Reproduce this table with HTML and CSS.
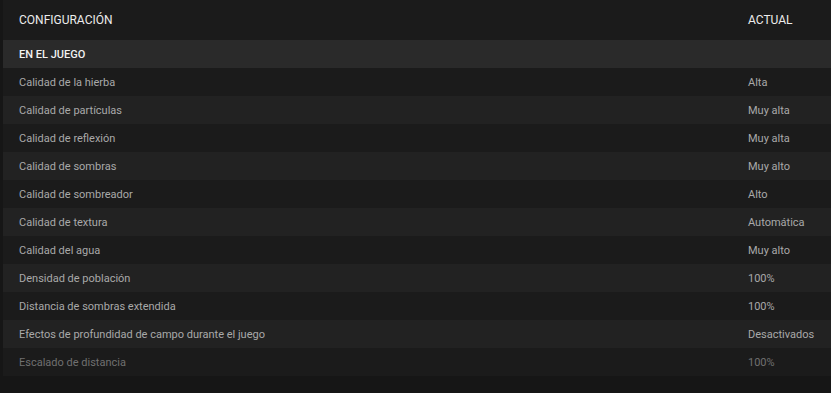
FILE: index.html
```html
<!DOCTYPE html>
<html lang="es">
<head>
<meta charset="utf-8">
<title>Configuración</title>
<link rel="stylesheet" href="styles.css">
</head>
<body>
<div class="panel">
  <div class="row head">
    <span class="name">CONFIGURACIÓN</span>
    <span class="val">ACTUAL</span>
  </div>
  <div class="row group"><span class="name">EN EL JUEGO</span></div>
  <div class="row odd"><span class="name">Calidad de la hierba</span><span class="val">Alta</span></div>
  <div class="row even"><span class="name">Calidad de partículas</span><span class="val">Muy alta</span></div>
  <div class="row odd"><span class="name">Calidad de reflexión</span><span class="val">Muy alta</span></div>
  <div class="row even"><span class="name">Calidad de sombras</span><span class="val">Muy alto</span></div>
  <div class="row odd"><span class="name">Calidad de sombreador</span><span class="val">Alto</span></div>
  <div class="row even"><span class="name">Calidad de textura</span><span class="val">Automática</span></div>
  <div class="row odd"><span class="name">Calidad del agua</span><span class="val">Muy alto</span></div>
  <div class="row even"><span class="name">Densidad de población</span><span class="val">100%</span></div>
  <div class="row odd"><span class="name">Distancia de sombras extendida</span><span class="val">100%</span></div>
  <div class="row even"><span class="name">Efectos de profundidad de campo durante el juego</span><span class="val">Desactivados</span></div>
  <div class="row odd dim"><span class="name">Escalado de distancia</span><span class="val">100%</span></div>
</div>
</body>
</html>
```
FILE: styles.css
```css
html, body {
  margin: 0;
  padding: 0;
  background: #161616;
  font-family: Roboto, "Liberation Sans", sans-serif;
  height: 393px;
  overflow: hidden;
}
.panel {
  margin-left: 3px;
  display: flex;
  flex-direction: column;
}
.row {
  display: grid;
  grid-template-columns: 1fr 83px;
  align-items: center;
  height: 28px;
  padding-left: 16px;
  font-size: 11px;
  color: #a9a9a9;
}
.head {
  height: 40px;
  background: #1b1b1b;
  font-size: 12px;
  color: #ececec;
}
.group {
  background: #2a2a2a;
  color: #f2f2f2;
  font-weight: 500;
  font-size: 11px;
}
.odd { background: #1b1b1b; }
.even { background: #222222; }
.dim { color: #707070; }
.val { white-space: nowrap; }
```
